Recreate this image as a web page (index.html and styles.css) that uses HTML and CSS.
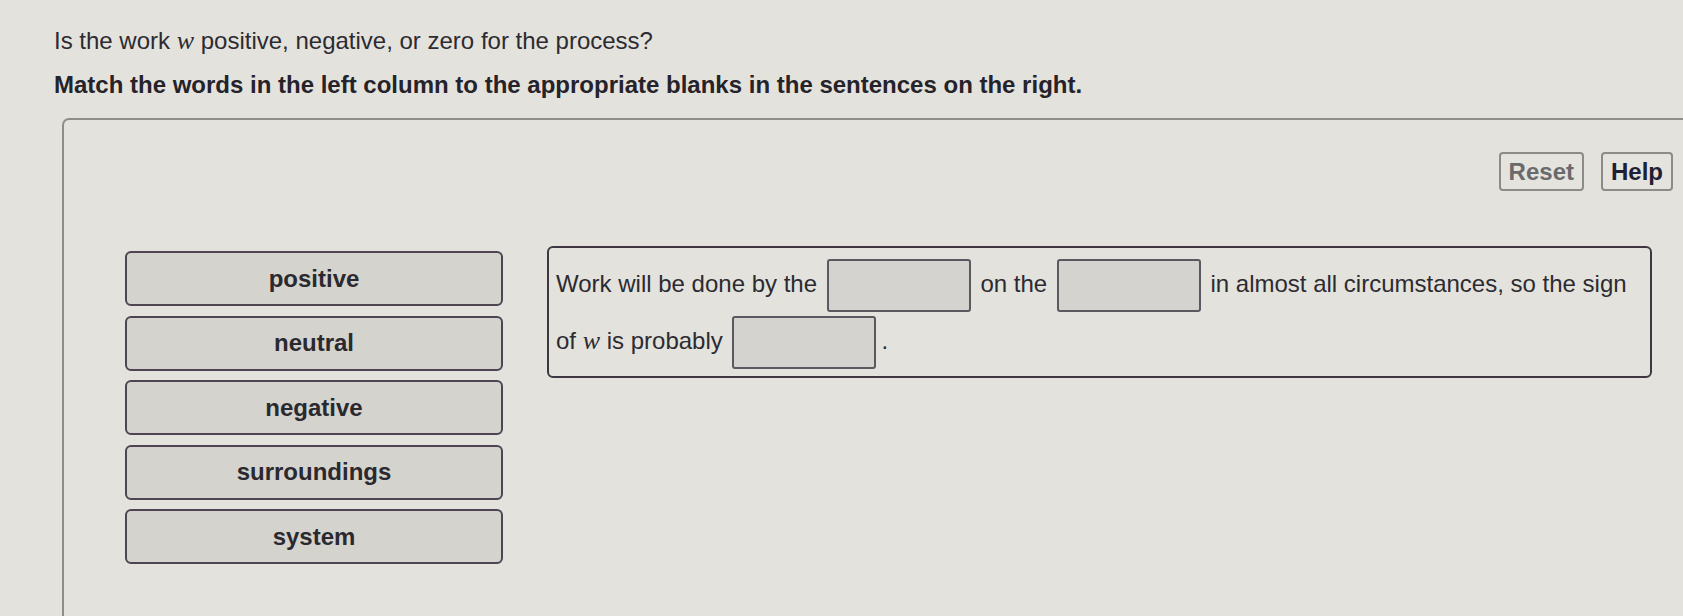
FILE: index.html
```html
<!DOCTYPE html>
<html lang="en">
<head>
  <meta charset="UTF-8">
  <title>Work sign matching</title>
  <link rel="stylesheet" href="styles.css">
</head>
<body>
  <div class="page">
    <!-- Prompt -->
    <p class="question">Is the work <i class="var">w</i> positive, negative, or zero for the process?</p>
    <p class="instructions">Match the words in the left column to the appropriate blanks in the sentences on the right.</p>

    <!-- Answer area -->
    <div class="answer-area">
      <div class="toolbar">
        <button class="tool-button reset">Reset</button>
        <button class="tool-button help">Help</button>
      </div>

      <div class="workspace">
        <!-- Word bank -->
        <div class="word-bank">
          <div class="word">positive</div>
          <div class="word">neutral</div>
          <div class="word">negative</div>
          <div class="word">surroundings</div>
          <div class="word">system</div>
        </div>

        <!-- Sentences -->
        <div class="sentences">
          <span class="seg">Work will be done by the</span>
          <span class="blank"></span>
          <span class="seg">on the</span>
          <span class="blank"></span>
          <span class="seg">in almost all circumstances, so the sign</span>
          <span class="seg">of <i class="var">w</i> is probably</span>
          <span class="blank"></span><span class="stop">.</span>
        </div>
      </div>
    </div>
  </div>
</body>
</html>
```

FILE: styles.css
```css
/* Base */
body {
  margin: 0;
  padding: 0;
  width: 1683px;
  height: 616px;
  overflow: hidden;
  background: #e4e2dc;
  font-family: "Liberation Sans", Arial, sans-serif;
  font-size: 24px;
  color: #2c2b31;
}

.page {
  padding: 27px 0 0 54px;
}

.var {
  font-family: "Liberation Serif", "Times New Roman", serif;
  font-style: italic;
  font-size: 26px;
  line-height: 1;
}

/* Prompt */
.question {
  margin: 0;
  line-height: 28px;
}

.instructions {
  margin: 16px 0 0;
  line-height: 28px;
  font-weight: bold;
  color: #252329;
}

/* Answer area */
.answer-area {
  box-sizing: border-box;
  width: 1640px;
  height: 498px;
  margin: 19px 0 0 8px;
  padding: 32px 27px 0 59px;
  border: 2px solid #8f8d8a;
  border-bottom: none;
  border-radius: 7px 7px 0 0;
}

.toolbar {
  display: flex;
  justify-content: flex-end;
  gap: 17px;
}

.tool-button {
  height: 39px;
  padding: 0 8px;
  border: 2px solid #8d8b88;
  border-radius: 4px;
  background: #e5e3de;
  font-family: inherit;
  font-size: 24px;
  font-weight: bold;
}

.tool-button.reset {
  color: #6a6a6c;
}

.tool-button.help {
  color: #1f2034;
}

.workspace {
  display: flex;
  align-items: flex-start;
  gap: 44px;
  margin-top: 55px;
}

/* Word bank */
.word-bank {
  display: flex;
  flex-direction: column;
  gap: 9.5px;
  width: 378px;
  padding: 5px 0 0 2px;
}

.word {
  box-sizing: border-box;
  height: 55px;
  display: flex;
  align-items: center;
  justify-content: center;
  background: #d5d3ce;
  border: 2px solid #4e4452;
  border-radius: 6px;
  font-weight: bold;
  color: #2a292e;
}

/* Sentences */
.sentences {
  box-sizing: border-box;
  width: 1105px;
  padding: 9px 7px 5px 7px;
  border: 2px solid #3e3642;
  border-radius: 6px;
  line-height: 28px;
}

.seg {
  white-space: nowrap;
}

.blank {
  box-sizing: border-box;
  display: inline-block;
  width: 144px;
  height: 53px;
  margin: 2px 3px;
  vertical-align: middle;
  background: #d4d3cf;
  border: 2px solid #5b5960;
  border-radius: 3px;
}

.stop {
  margin-left: 2px;
}
```
